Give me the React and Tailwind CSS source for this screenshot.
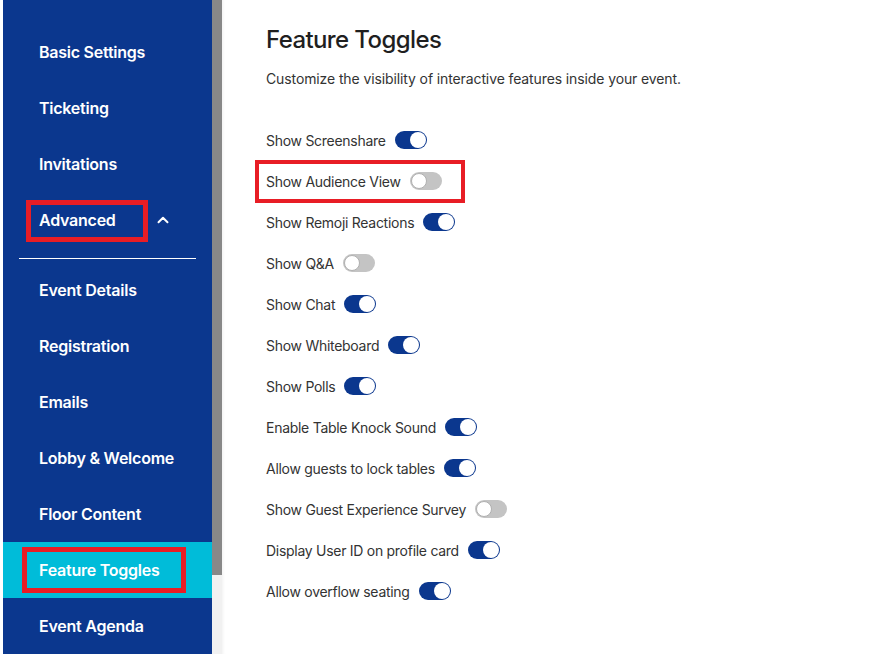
import React from "react";
import { ChevronUp } from "lucide-react";

const navTop = ["Basic Settings", "Ticketing", "Invitations"];
const navBottom = [
  "Event Details",
  "Registration",
  "Emails",
  "Lobby & Welcome",
  "Floor Content",
  "Feature Toggles",
  "Event Agenda",
];

const toggles = [
  ["Show Screenshare", true],
  ["Show Audience View", false, true],
  ["Show Remoji Reactions", true],
  ["Show Q&A", false],
  ["Show Chat", true],
  ["Show Whiteboard", true],
  ["Show Polls", true],
  ["Enable Table Knock Sound", true],
  ["Allow guests to lock tables", true],
  ["Show Guest Experience Survey", false],
  ["Display User ID on profile card", true],
  ["Allow overflow seating", true],
];

function Toggle({ on }) {
  return on ? (
    <span className="flex h-[18px] w-8 items-center justify-end rounded-full bg-[#0b378e] pr-px">
      <span className="h-4 w-4 rounded-full bg-white" />
    </span>
  ) : (
    <span className="flex h-[18px] w-8 items-center justify-start rounded-full bg-[#c4c4c4] pl-px">
      <span className="h-4 w-4 rounded-full border border-[#b0b0b0] bg-white" />
    </span>
  );
}

function NavItem({ label, active }) {
  return (
    <div
      className={`relative flex h-14 items-center pl-9 text-[16px] font-semibold tracking-[-0.015em] text-white ${
        active ? "bg-[#00bcd9]" : ""
      }`}
    >
      <span>{label}</span>
      {active && (
        <span className="pointer-events-none absolute left-[19px] top-[5px] h-[46px] w-[164px] border-[5px] border-[#e81d25]" />
      )}
    </div>
  );
}

export default function App() {
  return (
    <div
      className="flex h-[654px] w-[887px] overflow-hidden bg-white"
      style={{ fontFamily: "Inter, 'Noto Sans', sans-serif" }}
    >
      <div className="ml-[3px] flex w-[209px] flex-col bg-[#0b378e] pt-6">
        {navTop.map((l) => (
          <NavItem key={l} label={l} />
        ))}
        <div className="relative flex h-14 items-center pl-9 text-[16px] font-semibold tracking-[-0.015em] text-white">
          <span>Advanced</span>
          <span className="pointer-events-none absolute left-[23px] top-[8px] h-[42px] w-[122px] border-[5px] border-[#e81d25]" />
          <ChevronUp className="ml-[38px] h-[18px] w-[18px]" strokeWidth={2.6} />
        </div>
        <div className="ml-4 mr-[16px] mt-[10px] mb-[3px] h-px bg-white" />
        {navBottom.map((l) => (
          <NavItem key={l} label={l} active={l === "Feature Toggles"} />
        ))}
      </div>
      <div className="flex w-[10px] flex-col bg-[#f1f1f1]">
        <div className="h-[575px] bg-[#888888]" />
      </div>
      <div className="flex-1 bg-white pl-[44px] pt-[24px] shadow-[inset_3px_0_3px_-2px_rgba(0,0,0,0.06)]">
        <h1 className="text-[24px] font-medium leading-8 tracking-[-0.025em] text-[#1f1f1f]">Feature Toggles</h1>
        <p className="mt-[13px] text-[14px] leading-5 tracking-[-0.008em] text-[#333]">
          Customize the visibility of interactive features inside your event.
        </p>
        <div className="mt-[42px] flex flex-col gap-[23px]">
          {toggles.map(([label, on, boxed]) => (
            <div
              key={label}
              className="relative flex h-[18px] items-center gap-[9px] text-[14px] tracking-[-0.02em] text-[#333]"
            >
              <span>{label}</span>
              <Toggle on={on} />
              {boxed && (
                <span className="pointer-events-none absolute left-[-11px] top-[-12px] h-[43px] w-[210px] border-[4px] border-[#e81d25]" />
              )}
            </div>
          ))}
        </div>
      </div>
    </div>
  );
}
